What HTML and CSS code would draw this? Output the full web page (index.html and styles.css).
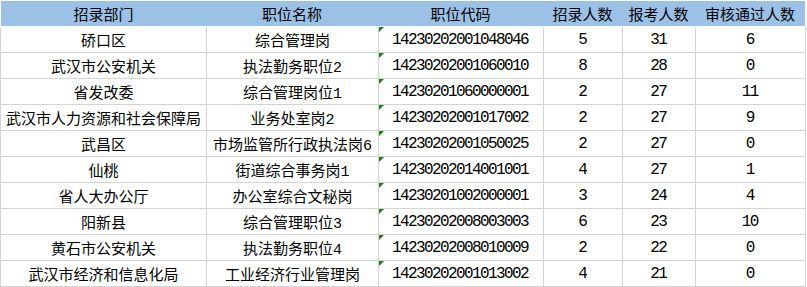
FILE: index.html
```html
<!DOCTYPE html>
<html lang="zh-CN">
<head>
<meta charset="utf-8">
<link rel="stylesheet" href="styles.css">
</head>
<body>
<div class="sheet">
  <div class="head">
    <div>招录部门</div><div>职位名称</div><div>职位代码</div><div>招录人数</div><div>报考人数</div><div>审核通过人数</div>
  </div>
  <div class="body">
    <div class="row"><div class="c">硚口区</div><div class="c">综合管理岗</div><div class="code">14230202001048046</div><div class="n">5</div><div class="n">31</div><div class="n last">6</div></div>
    <div class="row"><div class="c">武汉市公安机关</div><div class="c">执法勤务职位2</div><div class="code">14230202001060010</div><div class="n">8</div><div class="n">28</div><div class="n last">0</div></div>
    <div class="row"><div class="c">省发改委</div><div class="c">综合管理岗位1</div><div class="code">14230201060000001</div><div class="n">2</div><div class="n">27</div><div class="n last">11</div></div>
    <div class="row"><div class="c">武汉市人力资源和社会保障局</div><div class="c">业务处室岗2</div><div class="code">14230202001017002</div><div class="n">2</div><div class="n">27</div><div class="n last">9</div></div>
    <div class="row"><div class="c">武昌区</div><div class="c">市场监管所行政执法岗6</div><div class="code">14230202001050025</div><div class="n">2</div><div class="n">27</div><div class="n last">0</div></div>
    <div class="row"><div class="c">仙桃</div><div class="c">街道综合事务岗1</div><div class="code">14230202014001001</div><div class="n">4</div><div class="n">27</div><div class="n last">1</div></div>
    <div class="row"><div class="c">省人大办公厅</div><div class="c">办公室综合文秘岗</div><div class="code">14230201002000001</div><div class="n">3</div><div class="n">24</div><div class="n last">4</div></div>
    <div class="row"><div class="c">阳新县</div><div class="c">综合管理职位3</div><div class="code">14230202008003003</div><div class="n">6</div><div class="n">23</div><div class="n last">10</div></div>
    <div class="row"><div class="c">黄石市公安机关</div><div class="c">执法勤务职位4</div><div class="code">14230202008010009</div><div class="n">2</div><div class="n">22</div><div class="n last">0</div></div>
    <div class="row"><div class="c">武汉市经济和信息化局</div><div class="c">工业经济行业管理岗</div><div class="code">14230202001013002</div><div class="n">4</div><div class="n">21</div><div class="n last">0</div></div>
  </div>
</div>
</body>
</html>
```
FILE: styles.css
```css
html, body {
  margin: 0;
  padding: 0;
  background: #ffffff;
}
.sheet {
  width: 807px;
  font-family: "Liberation Mono", "Noto Sans CJK SC", monospace;
  font-size: 15px;
  color: #000;
}
.head {
  display: grid;
  grid-template-columns: 205px 172px 165px 79px 73px 110px;
  margin: 1px 0 0 1px;
  width: 804px;
  height: 25px;
  background: #9bc2e6;
  font-family: "Noto Sans CJK SC", sans-serif;
}
.head > div {
  display: flex;
  align-items: center;
  justify-content: center;
  line-height: 25px;
  white-space: nowrap;
}
.body {
  padding-top: 1px;
}
.row {
  display: grid;
  grid-template-columns: 206px 172px 165px 79px 73px 111px;
  height: 26px;
}
.row > div {
  box-sizing: border-box;
  border-left: 1px solid #d4d4d4;
  border-bottom: 1px solid #d4d4d4;
  display: flex;
  align-items: center;
  white-space: nowrap;
  overflow: visible;
}
.row > .c {
  justify-content: center;
  font-family: "Liberation Mono", "Noto Sans CJK SC", sans-serif;
}
.row > .code {
  position: relative;
  padding-left: 13px;
  font-size: 16px;
  letter-spacing: -1.6px;
}
.row > .code::before {
  content: "";
  position: absolute;
  left: 0;
  top: 0;
  width: 0;
  height: 0;
  border-top: 5px solid #1d7f1d;
  border-right: 5px solid transparent;
}
.row > .n {
  justify-content: center;
  font-size: 16px;
  letter-spacing: -1.6px;
  text-indent: -1.6px;
}
.row > .last {
  border-right: 1px solid #d4d4d4;
}
```
